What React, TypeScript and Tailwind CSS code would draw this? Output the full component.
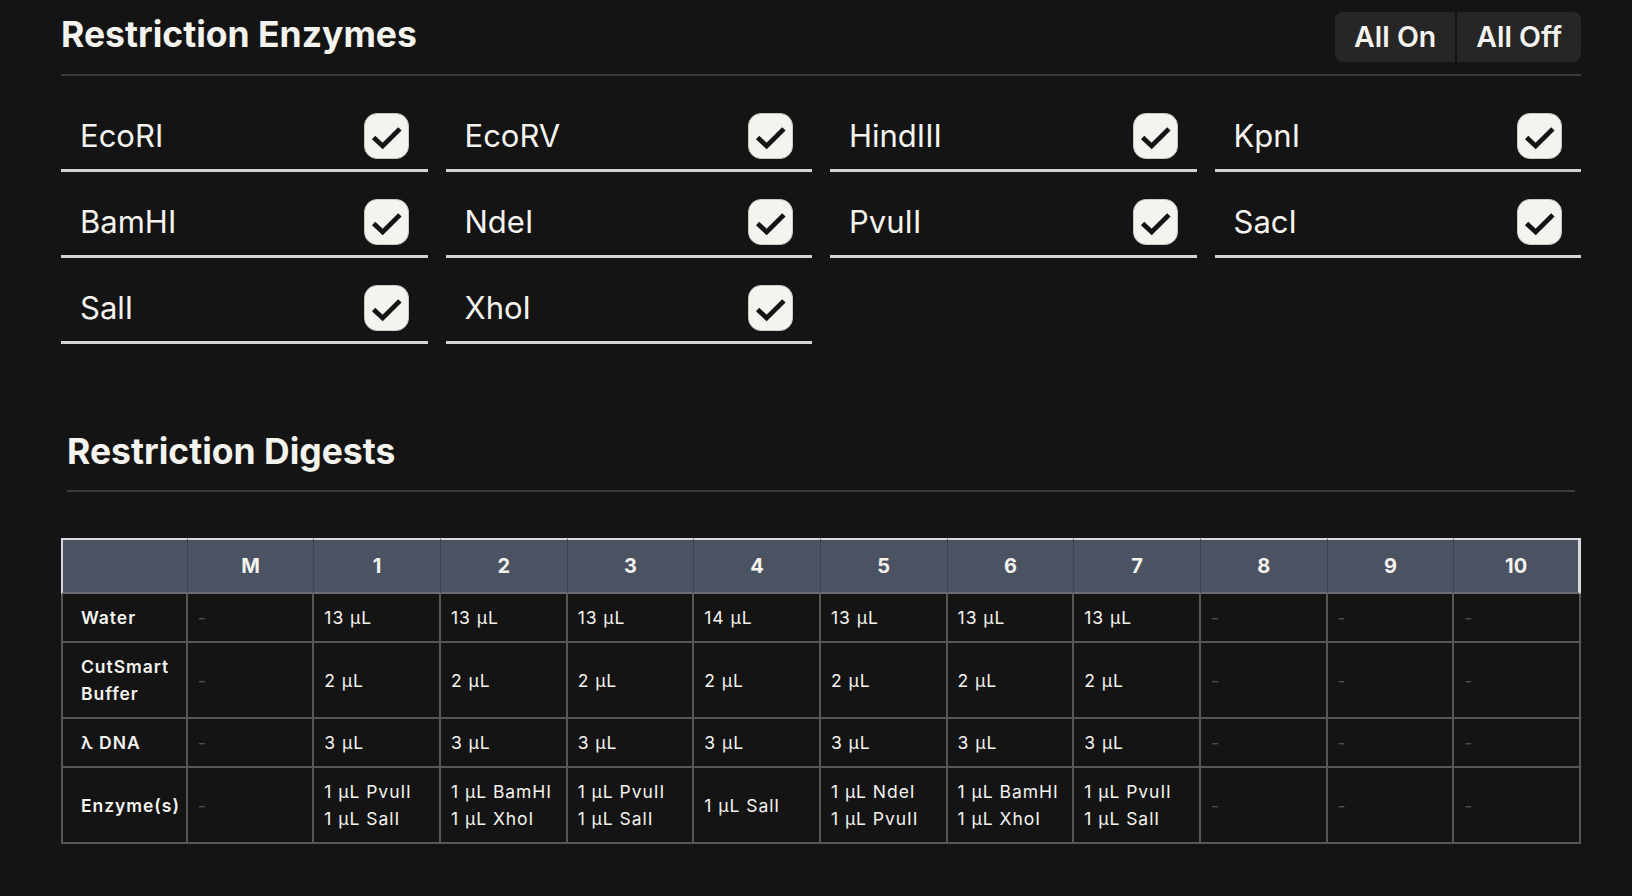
import React, { useState } from 'react';

const ENZYMES = ['EcoRI', 'EcoRV', 'HindIII', 'KpnI', 'BamHI', 'NdeI', 'PvuII', 'SacI', 'SalI', 'XhoI'];

const LANES = ['M', '1', '2', '3', '4', '5', '6', '7', '8', '9', '10'];

type Cell = string[] | null;

const ROWS: { label: string; cells: Cell[] }[] = [
    {
        label: 'Water',
        cells: [null, ['13 µL'], ['13 µL'], ['13 µL'], ['14 µL'], ['13 µL'], ['13 µL'], ['13 µL'], null, null, null],
    },
    {
        label: 'CutSmart Buffer',
        cells: [null, ['2 µL'], ['2 µL'], ['2 µL'], ['2 µL'], ['2 µL'], ['2 µL'], ['2 µL'], null, null, null],
    },
    {
        label: 'λ DNA',
        cells: [null, ['3 µL'], ['3 µL'], ['3 µL'], ['3 µL'], ['3 µL'], ['3 µL'], ['3 µL'], null, null, null],
    },
    {
        label: 'Enzyme(s)',
        cells: [
            null,
            ['1 µL PvuII', '1 µL SalI'],
            ['1 µL BamHI', '1 µL XhoI'],
            ['1 µL PvuII', '1 µL SalI'],
            ['1 µL SalI'],
            ['1 µL NdeI', '1 µL PvuII'],
            ['1 µL BamHI', '1 µL XhoI'],
            ['1 µL PvuII', '1 µL SalI'],
            null,
            null,
            null,
        ],
    },
];

const CheckBox: React.FC<{ on: boolean; onClick: () => void }> = ({ on, onClick }) => (
    <button
        onClick={onClick}
        className={`w-[45px] h-[46px] rounded-[13px] border flex items-center justify-center ${
            on ? 'bg-[#f4f3ee] border-[#c9c9c4]' : 'bg-transparent border-[#6b6b6b]'
        }`}
    >
        {on && (
            <svg width="45" height="46" viewBox="0 0 45 46">
                <polyline
                    points="9,24.5 18.5,33.5 36.5,15.5"
                    fill="none"
                    stroke="#141414"
                    strokeWidth="5"
                    strokeLinejoin="miter"
                />
            </svg>
        )}
    </button>
);

export default function App() {
    const [enabled, setEnabled] = useState<Record<string, boolean>>(
        Object.fromEntries(ENZYMES.map(e => [e, true]))
    );

    const setAll = (v: boolean) => setEnabled(Object.fromEntries(ENZYMES.map(e => [e, v])));

    return (
        <div className="min-h-screen bg-[#141414] text-[#f4f3ee] font-['Inter','Liberation_Sans',sans-serif]">
            <div className="pl-[61px] pr-[51px] pt-3">
                {/* enzymes header */}
                <div className="flex items-start justify-between">
                    <h2 className="mt-[3px] text-[35.5px] leading-10 font-bold">Restriction Enzymes</h2>
                    <div className="flex gap-[2px]">
                        <button
                            onClick={() => setAll(true)}
                            className="h-[50px] px-[19px] rounded-l-lg bg-[#262626] text-[28.5px] font-semibold"
                        >
                            All On
                        </button>
                        <button
                            onClick={() => setAll(false)}
                            className="h-[50px] px-[19px] rounded-r-lg bg-[#262626] text-[28.5px] font-semibold"
                        >
                            All Off
                        </button>
                    </div>
                </div>
                <div className="mt-3 border-t-2 border-[#3a3a3a]" />

                <div className="mt-[27px] grid grid-cols-4 gap-x-[18px] gap-y-[17px]">
                    {ENZYMES.map(name => (
                        <div
                            key={name}
                            className="flex items-center justify-between pl-[19px] pr-[19px] py-[10px] border-b-[3px] border-[#d2d2d0]"
                        >
                            <span className="text-[31px] leading-9">{name}</span>
                            <CheckBox
                                on={enabled[name]}
                                onClick={() => setEnabled({ ...enabled, [name]: !enabled[name] })}
                            />
                        </div>
                    ))}
                </div>

                {/* digests */}
                <div className="mt-[88px] mx-[6px]">
                    <h2 className="text-[35.5px] leading-10 font-bold">Restriction Digests</h2>
                    <div className="mt-[18px] border-t-2 border-[#3a3a3a]" />
                </div>

                <table className="mt-[46px] w-full table-fixed border-separate border-spacing-0 tracking-[0.06em]">
                    <thead>
                        <tr>
                            <th className="bg-[#4b5262] border-t-2 border-l-2 border-b-2 border-r border-t-[#d7d9de] border-l-[#d7d9de] border-b-[#6b6e74] border-r-[#3c4350] py-[11px] leading-[30px]" />
                            {LANES.map((l, i) => (
                                <th
                                    key={l}
                                    className={`bg-[#4b5262] border-t-2 border-b-2 border-t-[#d7d9de] border-b-[#6b6e74] py-[11px] leading-[30px] text-[20px] font-bold text-center tracking-normal ${
                                        i === LANES.length - 1
                                            ? 'border-r-[3px] border-r-[#d7d9de]'
                                            : 'border-r border-r-[#3c4350]'
                                    }`}
                                >
                                    {l}
                                </th>
                            ))}
                        </tr>
                    </thead>
                    <tbody>
                        {ROWS.map(row => (
                            <tr key={row.label}>
                                <td className="border-l-2 border-r-2 border-b-2 border-[#575757] pl-[18px] pr-[2px] py-[10px] text-[17.5px] leading-[27px] font-semibold align-middle">
                                    {row.label}
                                </td>
                                {row.cells.map((c, i) => (
                                    <td
                                        key={i}
                                        className="border-r-2 border-b-2 border-[#575757] pl-[10px] pr-1 py-[10px] text-[17.5px] leading-[27px] align-middle whitespace-nowrap"
                                    >
                                        {c ? (
                                            c.map(line => <div key={line}>{line}</div>)
                                        ) : (
                                            <span className="text-[#4f4f4f]">-</span>
                                        )}
                                    </td>
                                ))}
                            </tr>
                        ))}
                    </tbody>
                </table>
            </div>
        </div>
    );
}
